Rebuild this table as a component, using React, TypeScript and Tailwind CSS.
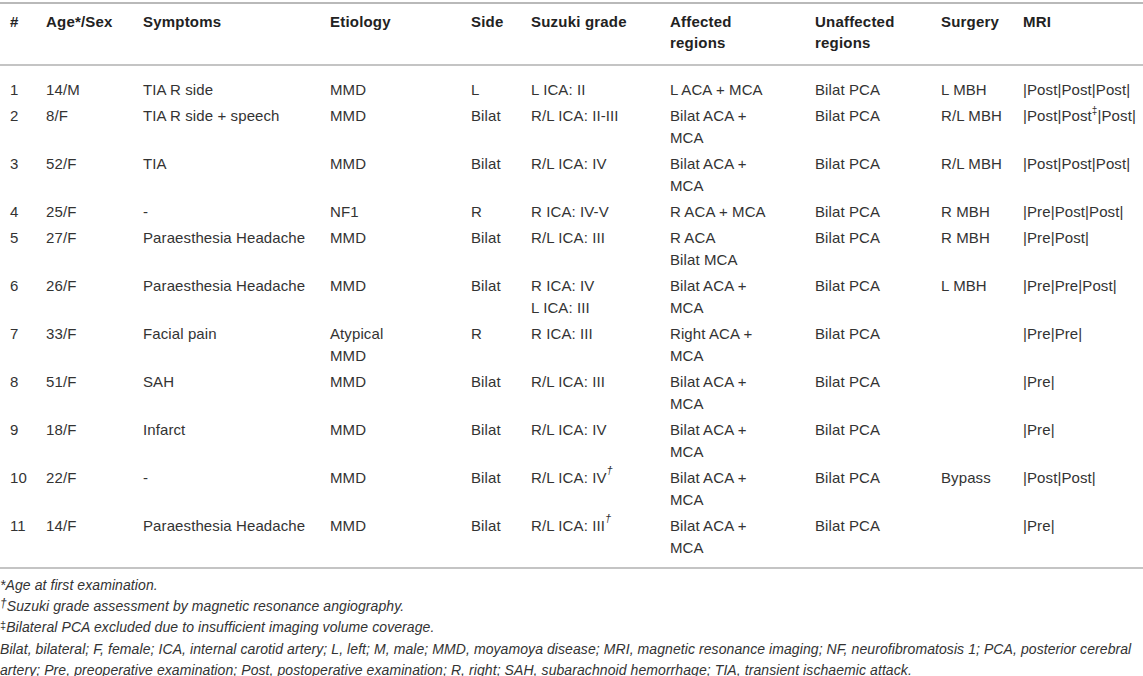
import React from "react";

type Cell = React.ReactNode[];

const Dag = () => <sup className="relative -top-[2px] text-[11px] italic leading-none align-top">†</sup>;
const DDag = () => <sup className="text-[10px] leading-none align-top relative top-[1px]">‡</sup>;

const rows: Cell[][] = [
  [["1"], ["14/M"], ["TIA R side"], ["MMD"], ["L"], ["L ICA: II"], ["L ACA + MCA"], ["Bilat PCA"], ["L MBH"], ["|Post|Post|Post|"]],
  [["2"], ["8/F"], ["TIA R side + speech"], ["MMD"], ["Bilat"], ["R/L ICA: II-III"], ["Bilat ACA +", "MCA"], ["Bilat PCA"], ["R/L MBH"], [<span key="a">|Post|Post<DDag />|Post|</span>]],
  [["3"], ["52/F"], ["TIA"], ["MMD"], ["Bilat"], ["R/L ICA: IV"], ["Bilat ACA +", "MCA"], ["Bilat PCA"], ["R/L MBH"], ["|Post|Post|Post|"]],
  [["4"], ["25/F"], ["-"], ["NF1"], ["R"], ["R ICA: IV-V"], ["R ACA + MCA"], ["Bilat PCA"], ["R MBH"], ["|Pre|Post|Post|"]],
  [["5"], ["27/F"], ["Paraesthesia Headache"], ["MMD"], ["Bilat"], ["R/L ICA: III"], ["R ACA", "Bilat MCA"], ["Bilat PCA"], ["R MBH"], ["|Pre|Post|"]],
  [["6"], ["26/F"], ["Paraesthesia Headache"], ["MMD"], ["Bilat"], ["R ICA: IV", "L ICA: III"], ["Bilat ACA +", "MCA"], ["Bilat PCA"], ["L MBH"], ["|Pre|Pre|Post|"]],
  [["7"], ["33/F"], ["Facial pain"], ["Atypical", "MMD"], ["R"], ["R ICA: III"], ["Right ACA +", "MCA"], ["Bilat PCA"], [""], ["|Pre|Pre|"]],
  [["8"], ["51/F"], ["SAH"], ["MMD"], ["Bilat"], ["R/L ICA: III"], ["Bilat ACA +", "MCA"], ["Bilat PCA"], [""], ["|Pre|"]],
  [["9"], ["18/F"], ["Infarct"], ["MMD"], ["Bilat"], ["R/L ICA: IV"], ["Bilat ACA +", "MCA"], ["Bilat PCA"], [""], ["|Pre|"]],
  [["10"], ["22/F"], ["-"], ["MMD"], ["Bilat"], [<span key="b">R/L ICA: IV<Dag /></span>], ["Bilat ACA +", "MCA"], ["Bilat PCA"], ["Bypass"], ["|Post|Post|"]],
  [["11"], ["14/F"], ["Paraesthesia Headache"], ["MMD"], ["Bilat"], [<span key="c">R/L ICA: III<Dag /></span>], ["Bilat ACA +", "MCA"], ["Bilat PCA"], [""], ["|Pre|"]],
];

const headers: Cell[] = [
  ["#"], ["Age*/Sex"], ["Symptoms"], ["Etiology"], ["Side"], ["Suzuki grade"], ["Affected", "regions"], ["Unaffected", "regions"], ["Surgery"], ["MRI"],
];

const gridCls = "grid grid-cols-[36px_97px_187px_141px_60px_139px_145px_126px_82px_1fr] pl-[10px]";

export default function App() {
  return (
    <div
      className="w-[1143px] h-[676px] bg-white overflow-hidden text-[#333]"
      style={{ fontFamily: '"Liberation Sans", Arial, sans-serif' }}
    >
      <div className="mt-[2px] border-t-2 border-[#b9b9b9]" />
      <div className={`${gridCls} pt-[7px] pb-[11px] text-[15px] tracking-[0.2px] leading-[21px] font-bold text-[#222] border-b-2 border-[#c4c4c4]`}>
        {headers.map((h, i) => (
          <div key={i}>
            {h.map((l, j) => (
              <div key={j}>{l}</div>
            ))}
          </div>
        ))}
      </div>
      <div className="pt-[11px] pb-[6px] border-b-2 border-[#c4c4c4]">
        {rows.map((r, ri) => (
          <div key={ri} className={`${gridCls} py-[2px] text-[15px] tracking-[0.1px] leading-[22px]`}>
            {r.map((c, ci) => (
              <div key={ci}>
                {c.map((l, li) => (
                  <div key={li} className="whitespace-nowrap">{l === "" ? "\u00a0" : l}</div>
                ))}
              </div>
            ))}
          </div>
        ))}
      </div>
      <div className="pt-[6px] text-[14px] tracking-[0.08px] leading-[21.2px] italic text-[#333] whitespace-nowrap">
        <div className="h-[21.2px]">*Age at first examination.</div>
        <div className="h-[21.2px]">
          <span className="text-[12px] leading-none relative -top-[4px]">†</span>Suzuki grade assessment by magnetic resonance angiography.
        </div>
        <div className="h-[21.2px]">
          <span className="text-[11px] leading-none relative -top-[3px] not-italic">‡</span>Bilateral PCA excluded due to insufficient imaging volume coverage.
        </div>
        <div className="h-[21.2px]">
          Bilat, bilateral; F, female; ICA, internal carotid artery; L, left; M, male; MMD, moyamoya disease; MRI, magnetic resonance imaging; NF, neurofibromatosis 1; PCA, posterior cerebral
        </div>
        <div className="h-[21.2px]">
          artery; Pre, preoperative examination; Post, postoperative examination; R, right; SAH, subarachnoid hemorrhage; TIA, transient ischaemic attack.
        </div>
      </div>
    </div>
  );
}
